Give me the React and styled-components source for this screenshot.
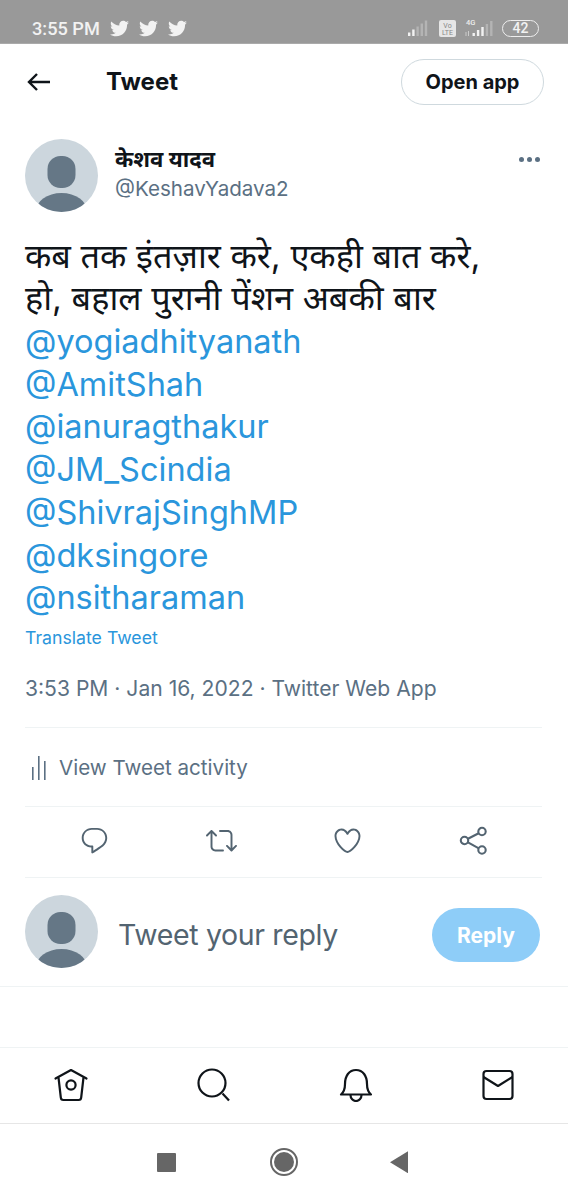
import React from "react"
import styled, { createGlobalStyle } from "styled-components"
import { FaTwitter } from "react-icons/fa"

const GlobalStyle = createGlobalStyle`
  html, body {
    margin: 0;
    padding: 0;
    background: #fff;
  }
  * {
    box-sizing: border-box;
  }
`

const Page = styled.div`
  display: flex;
  flex-direction: column;
  width: 568px;
  height: 1200px;
  overflow: hidden;
  font-family: Inter, "Noto Sans", sans-serif;
  color: #0f1419;
  background: #fff;
`

const StatusBar = styled.div`
  display: flex;
  align-items: center;
  justify-content: space-between;
  height: 44px;
  padding: 14px 29px 0 32px;
  background: #999;
  border-bottom: 1px solid #aaa;
  color: #f2f2f2;
`

const StatusLeft = styled.div`
  display: flex;
  align-items: center;
  gap: 10px;
  font-family: Roboto, sans-serif;
  font-size: 18.2px;
  font-weight: 500;
`

const StatusRight = styled.div`
  display: flex;
  align-items: center;
  gap: 9px;
`

const Birds = styled.div`
  display: flex;
  gap: 10px;
  font-size: 19px;
  line-height: 0;
`

const Battery = styled.div`
  width: 37px;
  height: 17px;
  border: 1.5px solid #eee;
  border-radius: 9px;
  font-family: Roboto, sans-serif;
  font-size: 14px;
  font-weight: 500;
  line-height: 14px;
  text-align: center;
`

const Header = styled.header`
  display: flex;
  align-items: center;
  height: 76px;
  padding: 0 24px 0 27px;
`

const Title = styled.h1`
  flex: 1;
  margin: 0 0 0 55px;
  font-size: 24px;
  font-weight: 700;
`

const OpenApp = styled.button`
  width: 143px;
  height: 46px;
  border: 1.5px solid #cfd9de;
  border-radius: 23px;
  background: #fff;
  color: #0f1419;
  font: 700 20px Inter, sans-serif;
`

const Content = styled.main`
  display: flex;
  flex-direction: column;
  padding: 19px 26px 0 25px;
`

const AuthorRow = styled.div`
  display: flex;
  gap: 17px;
`

const Author = styled.div`
  flex: 1;
  display: flex;
  flex-direction: column;
  padding-top: 5px;
`

const Name = styled.div`
  font-size: 22.1px;
  font-weight: 700;
  line-height: 30px;
`

const Handle = styled.div`
  font-size: 20.6px;
  line-height: 30px;
  color: #5b7083;
`

const More = styled.div`
  display: flex;
  gap: 3px;
  padding: 18px 2px 0 0;
`

const Dot = styled.span`
  width: 5px;
  height: 5px;
  border-radius: 50%;
  background: #5b7083;
`

const TweetBody = styled.div`
  margin-top: 23px;
  font-size: 32.5px;
  line-height: 42.7px;
  color: #0f1419;
`

const HindiLine = styled.div`
  height: 42.7px;
  font-size: 34.3px;
  line-height: 41px;
`

const Mentions = styled.div`
  margin-top: 1px;
`

const Mention = styled.div`
  color: #2a96dc;
`

const Translate = styled.div`
  margin-top: 6px;
  font-size: 17.7px;
  line-height: 24px;
  color: #2a96dc;
`

const Meta = styled.div`
  margin-top: 25px;
  padding-bottom: 24px;
  border-bottom: 1.5px solid #eff3f4;
  font-size: 21.1px;
  line-height: 28px;
  color: #5b7083;
`

const Activity = styled.div`
  display: flex;
  align-items: center;
  gap: 13px;
  height: 79px;
  padding: 2px 0 0 6px;
  border-bottom: 1.5px solid #eff3f4;
  font-size: 20.6px;
  color: #5b7083;
`

const Actions = styled.div`
  display: flex;
  justify-content: space-between;
  align-items: center;
  height: 71px;
  padding: 0 54px 2px 54px;
  border-bottom: 1.5px solid #eff3f4;
`

const ReplyRow = styled.div`
  display: flex;
  align-items: center;
  height: 109px;
  padding: 5px 28px 6px 25px;
  border-bottom: 1.5px solid #eff3f4;
`

const ReplyInput = styled.div`
  flex: 1;
  margin: 6px 0 0 20px;
  font-size: 28.5px;
  letter-spacing: -0.35px;
  color: #536471;
`

const ReplyButton = styled.button`
  width: 108px;
  height: 54px;
  margin-top: 8px;
  border: 0;
  border-radius: 27px;
  background: #8ecdf8;
  color: #fff;
  font: 700 21px Inter, sans-serif;
`

const BottomNav = styled.nav`
  display: flex;
  align-items: center;
  justify-content: space-between;
  height: 78px;
  margin-top: 60px;
  padding: 0 54px 0 54px;
  border-top: 1.5px solid #eff3f4;
  border-bottom: 1.5px solid #e6e6e6;
`

const SystemNav = styled.div`
  display: flex;
  align-items: center;
  justify-content: center;
  gap: 93px;
  height: 76px;
  padding-right: 3px;
`

const Square = styled.div`
  width: 19px;
  height: 19px;
  margin-right: 1px;
  border-radius: 1px;
  background: #666;
`

const Circle = styled.div`
  width: 28px;
  height: 28px;
  border: 2px solid #666;
  border-radius: 50%;
  padding: 2px;
  background: #666;
  background-clip: content-box;
`

const Triangle = styled.div`
  width: 18px;
  height: 22px;
  margin-left: -1px;
  background: #666;
  clip-path: polygon(100% 0, 100% 100%, 0 50%);
`

const Avatar = () => (
  <svg width="73" height="73" viewBox="0 0 73 73">
    <defs>
      <clipPath id="avatar-clip">
        <circle cx="36.5" cy="36.5" r="36.5" />
      </clipPath>
    </defs>
    <g clipPath="url(#avatar-clip)">
      <rect width="73" height="73" fill="#ccd6dd" />
      <rect x="22.5" y="17" width="28" height="32" rx="13" fill="#657786" />
      <ellipse cx="36.5" cy="73" rx="26" ry="19" fill="#657786" />
    </g>
  </svg>
)

const BackArrow = () => (
  <svg width="24" height="20" viewBox="0 0 24 20" fill="none" stroke="#0f1419" strokeWidth="2.4">
    <path d="M23 10H2M10 2l-8 8 8 8" />
  </svg>
)

const Signal = ({ lit }) => (
  <svg width="22" height="16" viewBox="0 0 22 16">
    {[0, 1, 2, 3, 4].map((i) => (
      <rect
        key={i}
        x={i * 4.2}
        y={12.5 - i * 3}
        width="2.4"
        height={3.5 + i * 3}
        fill={i < lit ? "#f2f2f2" : "#b4b4b4"}
      />
    ))}
  </svg>
)

const VoLte = () => (
  <svg width="17" height="17" viewBox="0 0 17 17">
    <rect width="17" height="17" rx="2" fill="#e6e6e6" />
    <text x="8.5" y="7.5" fontSize="7" textAnchor="middle" fill="#888" fontFamily="Roboto">Vo</text>
    <text x="8.5" y="15" fontSize="7" textAnchor="middle" fill="#888" fontFamily="Roboto">LTE</text>
  </svg>
)

const Signal4g = () => (
  <svg width="28" height="20" viewBox="0 0 28 20">
    <text x="1" y="6.5" fontSize="7.500" fontWeight="500" fill="#eee" fontFamily="Roboto">4G</text>
    <rect x="0.5" y="14" width="1" height="4" fill="#ccc" />
    <rect x="3" y="13" width="1" height="5" fill="#ccc" />
    {[0, 1, 2, 3, 4].map((i) => (
      <rect
        key={i}
        x={7.5 + i * 4.4}
        y={15 - i * 3}
        width="2.4"
        height={3 + i * 3}
        fill={i < 3 ? "#f2f2f2" : "#b4b4b4"}
      />
    ))}
  </svg>
)

const ActivityIcon = () => (
  <svg width="15" height="24" viewBox="0 0 15 24" fill="#5b7083">
    <rect x="1" y="11" width="1.6" height="13" />
    <rect x="7" y="0" width="1.6" height="24" />
    <rect x="13" y="5" width="1.6" height="19" />
  </svg>
)

const ActionIcon = ({ d, size = 31 }) => (
  <svg width={size} height={size} viewBox="0 0 24 24" fill="#536471">
    <path d={d} />
  </svg>
)

const ShareIcon = () => (
  <svg width="29" height="29" viewBox="0 0 29 29" fill="none" stroke="#536471" strokeWidth="2.1">
    <circle cx="5.5" cy="14.5" r="3.7" />
    <circle cx="23" cy="5.5" r="3.7" />
    <circle cx="23" cy="24" r="3.7" />
    <path d="M9 12.8l10.7-5.6M9 16.3l10.8 6" />
  </svg>
)

const HomeIcon = () => (
  <svg width="34" height="34" viewBox="0 0 34 34" fill="none" stroke="#0f1419" strokeWidth="2.2" strokeLinejoin="round">
    <path d="M1.5 10.5L17 2l15.5 8.5" strokeLinecap="round" />
    <path d="M4.5 9.5l2.3 20c.1 1.6 1.1 2.5 2.5 2.5h15.4c1.4 0 2.4-.9 2.5-2.5l2.3-20" />
    <circle cx="17" cy="17" r="4.6" />
  </svg>
)

const SearchIcon = () => (
  <svg width="34" height="34" viewBox="0 0 34 34" fill="none" stroke="#0f1419" strokeWidth="2.2">
    <circle cx="15" cy="15" r="13.5" />
    <path d="M25.5 25.5l6.5 7" />
  </svg>
)

const BellIcon = () => (
  <svg width="34" height="34" viewBox="0 0 34 34" fill="none" stroke="#0f1419" strokeWidth="2.2" strokeLinejoin="round">
    <path d="M2 26.5h30c-3-2.5-4-6-4-10.500C28 8 24 2 17 2S6 8 6 16c0 4.500-1 8-4 10.500z" />
    <path d="M11.500 27c0 3.500 2.500 6 5.500 6s5.500-2.500 5.500-6" />
  </svg>
)

const MailIcon = () => (
  <svg width="32" height="32" viewBox="0 0 32 32" fill="none" stroke="#0f1419" strokeWidth="2.2" strokeLinejoin="round">
    <rect x="1.500" y="2" width="29" height="28" rx="3" />
    <path d="M1.500 8L16 17l14.500-9" />
  </svg>
)

const replyPath = "M14.046 2.242l-4.148-.01h-.002c-4.374 0-7.8 3.427-7.8 7.802 0 4.098 3.186 7.206 7.465 7.37v3.828c0 .108.044.286.12.403.142.225.384.347.632.347.138 0 .277-.038.402-.118.264-.168 6.473-4.14 8.088-5.506 1.902-1.61 3.04-3.97 3.043-6.312v-.017c-.006-4.367-3.43-7.787-7.8-7.788zm3.787 12.972c-1.134.96-4.862 3.405-6.772 4.643V16.67c0-.414-.335-.75-.75-.75h-.396c-3.66 0-6.318-2.476-6.318-5.886 0-3.534 2.768-6.302 6.3-6.302l4.147.01h.002c3.532 0 6.3 2.766 6.302 6.296-.003 1.91-.942 3.844-2.514 5.176z"
const retweetPath = "M23.77 15.67c-.292-.293-.767-.293-1.06 0l-2.22 2.22V7.65c0-2.068-1.683-3.75-3.75-3.75h-5.85c-.414 0-.75.336-.75.75s.336.75.75.75h5.85c1.24 0 2.25 1.01 2.25 2.25v10.24l-2.22-2.22c-.293-.293-.768-.293-1.06 0s-.294.768 0 1.06l3.5 3.5c.145.147.337.22.53.22s.383-.072.53-.22l3.5-3.5c.294-.292.294-.767 0-1.06zm-10.66 3.28H7.26c-1.24 0-2.25-1.01-2.25-2.25V6.46l2.22 2.22c.148.147.34.22.532.22s.384-.073.53-.22c.293-.293.293-.768 0-1.06l-3.5-3.5c-.293-.294-.768-.294-1.06 0l-3.5 3.5c-.294.292-.294.767 0 1.06s.767.293 1.06 0l2.22-2.22V16.7c0 2.068 1.683 3.75 3.75 3.75h5.85c.414 0 .75-.336.75-.75s-.337-.75-.75-.75z"
const heartPath = "M12 21.638h-.014C9.403 21.59 1.95 14.856 1.95 8.478c0-3.064 2.525-5.754 5.403-5.754 2.29 0 3.83 1.58 4.646 2.73.814-1.148 2.354-2.73 4.645-2.73 2.88 0 5.404 2.69 5.404 5.755 0 6.376-7.454 13.11-10.037 13.157H12zM7.354 4.225c-2.08 0-3.903 1.988-3.903 4.255 0 5.74 7.034 11.596 8.55 11.658 1.518-.062 8.55-5.917 8.55-11.658 0-2.267-1.823-4.255-3.903-4.255-2.528 0-3.94 2.936-3.952 2.965-.23.562-1.156.562-1.387 0-.014-.03-1.425-2.965-3.954-2.965z"

const mentions = [
  "@yogiadhityanath",
  "@AmitShah",
  "@ianuragthakur",
  "@JM_Scindia",
  "@ShivrajSinghMP",
  "@dksingore",
  "@nsitharaman",
]

const App = () => (
  <Page>
    <GlobalStyle />
    <StatusBar>
      <StatusLeft>
        3:55 PM
        <Birds>
          <FaTwitter />
          <FaTwitter />
          <FaTwitter />
        </Birds>
      </StatusLeft>
      <StatusRight>
        <Signal lit={2} />
        <VoLte />
        <Signal4g />
        <Battery>42</Battery>
      </StatusRight>
    </StatusBar>
    <Header>
      <BackArrow />
      <Title>Tweet</Title>
      <OpenApp>Open app</OpenApp>
    </Header>
    <Content>
      <AuthorRow>
        <Avatar />
        <Author>
          <Name>केशव यादव</Name>
          <Handle>@KeshavYadava2</Handle>
        </Author>
        <More>
          <Dot />
          <Dot />
          <Dot />
        </More>
      </AuthorRow>
      <TweetBody>
        <HindiLine>कब तक इंतज़ार करे, एकही बात करे,</HindiLine>
        <HindiLine>हो, बहाल पुरानी पेंशन अबकी बार</HindiLine>
        <Mentions>
          {mentions.map((m) => (
            <Mention key={m}>{m}</Mention>
          ))}
        </Mentions>
      </TweetBody>
      <Translate>Translate Tweet</Translate>
      <Meta>3:53 PM · Jan 16, 2022 · Twitter Web App</Meta>
      <Activity>
        <ActivityIcon />
        View Tweet activity
      </Activity>
      <Actions>
        <ActionIcon d={replyPath} />
        <ActionIcon d={retweetPath} />
        <ActionIcon d={heartPath} />
        <ShareIcon />
      </Actions>
    </Content>
    <ReplyRow>
      <Avatar />
      <ReplyInput>Tweet your reply</ReplyInput>
      <ReplyButton>Reply</ReplyButton>
    </ReplyRow>
    <BottomNav>
      <HomeIcon />
      <SearchIcon />
      <BellIcon />
      <MailIcon />
    </BottomNav>
    <SystemNav>
      <Square />
      <Circle />
      <Triangle />
    </SystemNav>
  </Page>
)

export default App
